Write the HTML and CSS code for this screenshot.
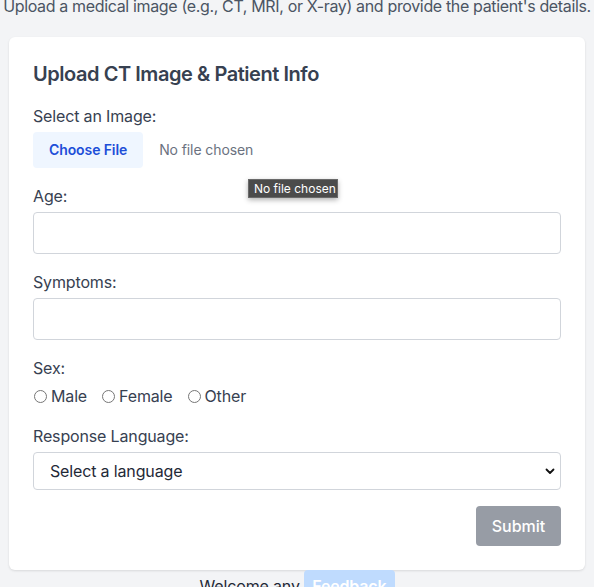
FILE: index.html
```html
<!DOCTYPE html>
<html lang="en">
<head>
<meta charset="utf-8">
<title>Upload CT Image</title>
<link rel="stylesheet" href="styles.css">
</head>
<body>
<main class="page">
  <p class="intro">Upload a medical image (e.g., CT, MRI, or X-ray) and provide the patient's details.</p>
  <form class="card">
    <h2 class="card-title">Upload CT Image &amp; Patient Info</h2>

    <div class="field">
      <label class="label">Select an Image:</label>
      <div class="file-row">
        <span class="file-btn">Choose File</span>
        <span class="file-name">No file chosen</span>
        <span class="tooltip">No file chosen</span>
      </div>
    </div>

    <div class="field">
      <label class="label" for="age">Age:</label>
      <input class="input" id="age" type="text">
    </div>

    <div class="field">
      <label class="label" for="symptoms">Symptoms:</label>
      <input class="input" id="symptoms" type="text">
    </div>

    <div class="field">
      <span class="label">Sex:</span>
      <div class="radios">
        <label class="radio"><input type="radio" name="sex"><span>Male</span></label>
        <label class="radio"><input type="radio" name="sex"><span>Female</span></label>
        <label class="radio"><input type="radio" name="sex"><span>Other</span></label>
      </div>
    </div>

    <div class="field">
      <label class="label" for="lang">Response Language:</label>
      <div class="select-wrap">
        <select class="select" id="lang">
          <option>Select a language</option>
        </select>
        <svg class="chevron" width="10" height="7" viewBox="0 0 10 7" aria-hidden="true"><path d="M1.5 1.5 L5 5 L8.5 1.5" fill="none" stroke="#111" stroke-width="1.8" stroke-linecap="round" stroke-linejoin="round"/></svg>
      </div>
    </div>

    <div class="actions">
      <button class="submit" type="button">Submit</button>
    </div>
  </form>
  <div class="footer">Welcome any <span class="feedback">Feedback</span></div>
</main>
</body>
</html>
```
FILE: styles.css
```css
* { box-sizing: border-box; }
html, body { margin: 0; }
body {
  background: #f3f4f6;
  font-family: Inter, "Noto Sans", "Liberation Sans", sans-serif;
  color: #1f2937;
  font-size: 16px;
  line-height: 24px;
  letter-spacing: -0.15px;
  overflow: hidden;
}
.page { padding: 0 9px; }
.intro {
  margin: -6px -9px 19px;
  text-align: center;
  color: #4b5563;
  white-space: nowrap;
  letter-spacing: -0.35px;
}
.card {
  background: #fff;
  border-radius: 6px;
  box-shadow: 0 1px 3px rgba(0,0,0,0.08), 0 1px 2px rgba(0,0,0,0.04);
  padding: 23px 24px 24px;
}
.card-title {
  margin: 0 0 16px;
  font-size: 20px;
  line-height: 28px;
  font-weight: 600;
  color: #374151;
  letter-spacing: -0.45px;
}
.field { margin-bottom: 16px; }
.label {
  display: block;
  margin-bottom: 4px;
  color: #374151;
}
.file-row {
  position: relative;
  display: flex;
  align-items: center;
}
.file-btn {
  padding: 8px 16px;
  font-size: 14px;
  line-height: 20px;
  font-weight: 600;
  color: #1d4ed8;
  background: #eff6ff;
  border-radius: 4px;
  margin-right: 16px;
  letter-spacing: -0.1px;
}
.file-name {
  font-size: 14px;
  color: #6b7280;
  letter-spacing: -0.1px;
}
.tooltip {
  position: absolute;
  left: 215px;
  top: 47px;
  width: 90px;
  height: 19px;
  background: #4b4b4b;
  border: 1px solid #6a6a6a;
  color: #fff;
  font-size: 12px;
  line-height: 17px;
  padding: 0 5px;
  letter-spacing: 0;
  white-space: nowrap;
  box-shadow: 0 2px 5px rgba(0,0,0,0.3);
}
.input {
  display: block;
  width: 100%;
  height: 42px;
  padding: 8px 12px;
  border: 1px solid #d1d5db;
  border-radius: 4px;
  font: inherit;
  background: #fff;
}
.radios {
  display: flex;
  gap: 14px;
  color: #374151;
}
.radio {
  display: flex;
  align-items: center;
  gap: 4px;
}
.radio input {
  margin: 0 0 0 1px;
  width: 13px;
  height: 13px;
}
.select-wrap { position: relative; }
.select {
  display: block;
  width: 100%;
  height: 38px;
  padding: 6px 16px;
  border: 1px solid #d1d5db;
  border-radius: 4px;
  font: inherit;
  letter-spacing: -0.15px;
  color: #1f2937;
  background: #fff;
  appearance: none;
  -webkit-appearance: none;
}
.chevron {
  position: absolute;
  right: 6px;
  top: 16px;
  pointer-events: none;
}
.actions {
  display: flex;
  justify-content: flex-end;
}
.submit {
  height: 40px;
  width: 85px;
  padding: 8px 0;
  border: 0;
  border-radius: 4px;
  background: #979ca5;
  color: #fff;
  font: inherit;
  font-weight: 500;
}
.footer {
  text-align: center;
  color: #1f2937;
  line-height: 24px;
}
.feedback {
  display: inline-block;
  padding: 4px 8px;
  background: #bfdbfe;
  color: #fff;
  font-weight: 600;
  border-radius: 4px;
  line-height: 24px;
}
```
